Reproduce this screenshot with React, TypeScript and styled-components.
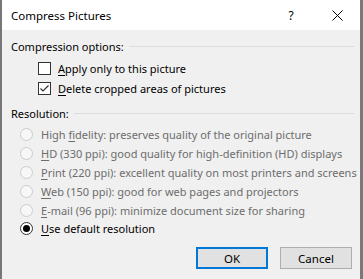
import React from "react";
import styled, { createGlobalStyle } from "styled-components";

const Global = createGlobalStyle`
  html, body { margin: 0; padding: 0; background: #f0f0f0; }
  body { font-family: "Noto Sans", "Open Sans", sans-serif; font-size: 11px; color: #000; }
`;

const Window = styled.div`
  width: 363px;
  height: 279px;
  box-sizing: border-box;
  border-left: 2px solid #777777;
  border-right: 3px solid #7a7a7a;
  background: #f0f0f0;
  display: flex;
  flex-direction: column;
  overflow: hidden;
`;

const TitleBar = styled.div`
  height: 30px;
  background: #ffffff;
  display: flex;
  align-items: center;
  padding-left: 9px;
  flex-shrink: 0;
`;

const Title = styled.div`
  flex: 1;
  font-size: 11.5px;
  color: #000;
`;

const TitleButton = styled.div`
  width: 46px;
  height: 30px;
  display: flex;
  align-items: center;
  justify-content: center;
  font-size: 12px;
`;

const Body = styled.div`
  display: flex;
  flex-direction: column;
  padding: 0 6px 0 9px;
`;

const SectionHeader = styled.div<{ $top: number }>`
  display: flex;
  align-items: center;
  height: 16px;
  margin-top: ${(p) => p.$top}px;
`;

const SectionLine = styled.div`
  flex: 1;
  height: 1px;
  background: #dcdcdc;
  margin-left: 5px;
`;

const List = styled.div<{ $indent: number; $top: number }>`
  display: flex;
  flex-direction: column;
  padding-left: ${(p) => p.$indent}px;
  margin-top: ${(p) => p.$top}px;
`;

const Row = styled.label<{ $h: number; $disabled?: boolean; $gap: number }>`
  display: flex;
  align-items: center;
  height: ${(p) => p.$h}px;
  gap: ${(p) => p.$gap}px;
  color: ${(p) => (p.$disabled ? "#6d6d6d" : "#000")};
  white-space: nowrap;
`;

const Box = styled.span`
  width: 13px;
  height: 13px;
  box-sizing: border-box;
  border: 1px solid #333333;
  background: #ffffff;
  display: flex;
  align-items: center;
  justify-content: center;
  flex-shrink: 0;
`;

const Radio = styled.span<{ $disabled?: boolean; $checked?: boolean }>`
  width: 13px;
  height: 13px;
  box-sizing: border-box;
  border-radius: 50%;
  border: 1px solid ${(p) => (p.$disabled ? "#cccccc" : "#333333")};
  background: ${(p) => (p.$disabled ? "#f7f7f7" : "#ffffff")};
  display: flex;
  align-items: center;
  justify-content: center;
  flex-shrink: 0;
`;

const Dot = styled.span`
  width: 7px;
  height: 7px;
  border-radius: 50%;
  background: #000;
`;

const U = styled.span`
  text-decoration: underline;
  text-underline-offset: 2px;
`;

const ButtonRow = styled.div`
  display: flex;
  justify-content: flex-end;
  gap: 12px;
  margin-top: 9px;
  padding-right: 2px;
`;

const Button = styled.div<{ $default?: boolean }>`
  width: 72px;
  height: 22px;
  box-sizing: border-box;
  background: #e1e1e1;
  border: ${(p) => (p.$default ? "2px solid #0078d7" : "1px solid #adadad")};
  display: flex;
  align-items: center;
  justify-content: center;
  font-size: 11.5px;
`;

const Check = () => (
  <svg width="11" height="11" viewBox="0 0 11 11">
    <path d="M1.5 5.5 L4 8 L9.5 2.5" fill="none" stroke="#333" strokeWidth="1.2" />
  </svg>
);

const Close = () => (
  <svg width="11" height="11" viewBox="0 0 11 11">
    <path d="M0.5 0.5 L10.5 10.5 M10.5 0.5 L0.5 10.5" stroke="#000" strokeWidth="1" />
  </svg>
);

type Opt = { key: string; rest: string; pre?: string; checked?: boolean; disabled?: boolean };

const radios: Opt[] = [
  { pre: "High ", key: "f", rest: "idelity: preserves quality of the original picture", disabled: true },
  { key: "H", rest: "D (330 ppi): good quality for high-definition (HD) displays", disabled: true },
  { key: "P", rest: "rint (220 ppi): excellent quality on most printers and screens", disabled: true },
  { key: "W", rest: "eb (150 ppi): good for web pages and projectors", disabled: true },
  { key: "E", rest: "-mail (96 ppi): minimize document size for sharing", disabled: true },
  { key: "U", rest: "se default resolution", checked: true },
];

export default function App() {
  return (
    <>
      <Global />
      <Window>
        <TitleBar>
          <Title>Compress Pictures</Title>
          <TitleButton>?</TitleButton>
          <TitleButton>
            <Close />
          </TitleButton>
        </TitleBar>
        <Body>
          <SectionHeader $top={8}>
            Compression options:
            <SectionLine />
          </SectionHeader>
          <List $indent={27} $top={4}>
            <Row $h={20} $gap={7}>
              <Box />
              <span>
                <U>A</U>pply only to this picture
              </span>
            </Row>
            <Row $h={20} $gap={7}>
              <Box>
                <Check />
              </Box>
              <span>
                <U>D</U>elete cropped areas of pictures
              </span>
            </Row>
          </List>
          <SectionHeader $top={7}>
            Resolution:
            <SectionLine />
          </SectionHeader>
          <List $indent={9} $top={4.6}>
            {radios.map((r, i) => (
              <Row key={i} $h={18.8} $gap={8} $disabled={r.disabled}>
                <Radio $disabled={r.disabled}>{r.checked && <Dot />}</Radio>
                <span>
                  {r.pre}
                  <U>{r.key}</U>
                  {r.rest}
                </span>
              </Row>
            ))}
          </List>
          <ButtonRow>
            <Button $default>OK</Button>
            <Button>Cancel</Button>
          </ButtonRow>
        </Body>
      </Window>
    </>
  );
}
